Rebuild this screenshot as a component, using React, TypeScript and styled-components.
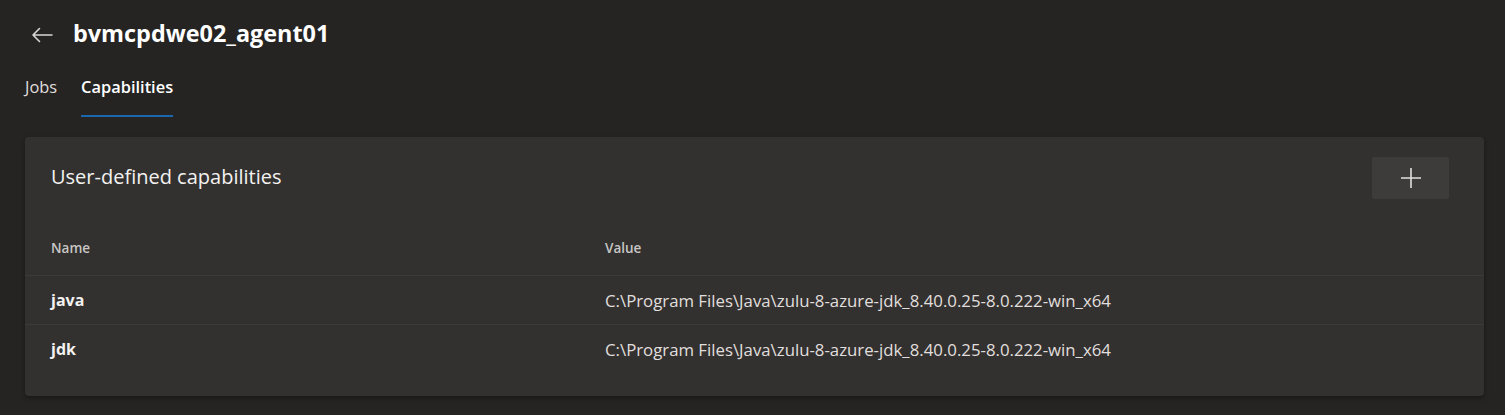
import React from 'react'
import styled, { createGlobalStyle } from 'styled-components'

const GlobalStyle = createGlobalStyle`
  html, body {
    margin: 0;
    padding: 0;
    background: #252423;
  }
  body {
    font-family: "Open Sans", "Noto Sans", sans-serif;
    color: #f3f2f1;
  }
`

const rows = [
  { name: 'java', value: 'C:\\Program Files\\Java\\zulu-8-azure-jdk_8.40.0.25-8.0.222-win_x64' },
  { name: 'jdk', value: 'C:\\Program Files\\Java\\zulu-8-azure-jdk_8.40.0.25-8.0.222-win_x64' },
]

const App = () => {
  return (
    <Page>
      <GlobalStyle />
      <Header>
        <BackButton aria-label='Back'>
          <svg width='22' height='16' viewBox='0 0 22 16' fill='none'>
            <path d='M21 8H2M8.5 1.5L2 8l6.5 6.5' stroke='#d8d6d4' strokeWidth='1.6' strokeLinecap='round' strokeLinejoin='round' />
          </svg>
        </BackButton>
        <Title>bvmcpdwe02_agent01</Title>
      </Header>

      <Tabs>
        <Tab>Jobs</Tab>
        <Tab $active>Capabilities</Tab>
      </Tabs>

      <Card>
        <CardHeader>
          <CardTitle>User-defined capabilities</CardTitle>
          <AddButton aria-label='Add'>
            <svg width='20' height='20' viewBox='0 0 20 20'>
              <path d='M10 0v20M0 10h20' stroke='#e1dfdd' strokeWidth='1.6' />
            </svg>
          </AddButton>
        </CardHeader>

        <Table>
          <HeadRow>
            <HeadCell>Name</HeadCell>
            <HeadCell>Value</HeadCell>
          </HeadRow>
          {rows.map((r) => (
            <Row key={r.name}>
              <NameCell>{r.name}</NameCell>
              <ValueCell>{r.value}</ValueCell>
            </Row>
          ))}
        </Table>
      </Card>
    </Page>
  )
}

export default App

const Page = styled.div`
  width: 1505px;
  height: 415px;
  box-sizing: border-box;
  padding: 0 21px 0 25px;
  background: #252423;
`

const Header = styled.div`
  display: flex;
  align-items: center;
  height: 68px;
  gap: 20px;
  padding-left: 6px;
  padding-bottom: 2px;
  box-sizing: border-box;
`

const BackButton = styled.div`
  display: flex;
  align-items: center;
  width: 22px;
  height: 22px;
  margin-top: 3px;
`

const Title = styled.h1`
  margin: 0;
  font-size: 23.4px;
  font-weight: 700;
  color: #ffffff;
`

const Tabs = styled.div`
  display: flex;
  gap: 24px;
  height: 49px;
`

const Tab = styled.div<{ $active?: boolean }>`
  display: flex;
  align-items: center;
  height: 100%;
  box-sizing: border-box;
  padding-bottom: 10px;
  font-size: 16.4px;
  font-weight: ${(p) => (p.$active ? 600 : 400)};
  color: ${(p) => (p.$active ? '#ffffff' : '#e1dfdd')};
  border-bottom: 2px solid ${(p) => (p.$active ? '#1a67b0' : 'transparent')};
`

const Card = styled.div`
  margin-top: 20px;
  height: 259px;
  background: #323130;
  border-radius: 4px;
  box-shadow: 0 2px 4px rgba(0, 0, 0, 0.35);
`

const CardHeader = styled.div`
  display: flex;
  align-items: center;
  justify-content: space-between;
  padding: 20px 35px 0 26px;
  height: 42px;
`

const CardTitle = styled.h2`
  margin: 0 0 3px;
  font-size: 20px;
  font-weight: 400;
  color: #f3f2f1;
`

const AddButton = styled.div`
  display: flex;
  align-items: center;
  justify-content: center;
  width: 77px;
  height: 42px;
  background: #3d3c3b;
  border-radius: 2px;
`

const Table = styled.div`
  margin-top: 21px;
`

const gridCols = `
  display: grid;
  grid-template-columns: 554px 1fr;
  padding-left: 26px;
  align-items: center;
`

const HeadRow = styled.div`
  ${gridCols}
  height: 55px;
  border-bottom: 1px solid #3b3a39;
`

const HeadCell = styled.div`
  font-size: 13.5px;
  font-weight: 600;
  color: #c8c6c4;
`

const Row = styled.div`
  ${gridCols}
  height: 48px;
  & + & {
    border-top: 1px solid #3b3a39;
  }
`

const NameCell = styled.div`
  font-size: 16px;
  font-weight: 700;
  color: #f3f2f1;
`

const ValueCell = styled.div`
  font-size: 16.8px;
  color: #e1dfdd;
`
